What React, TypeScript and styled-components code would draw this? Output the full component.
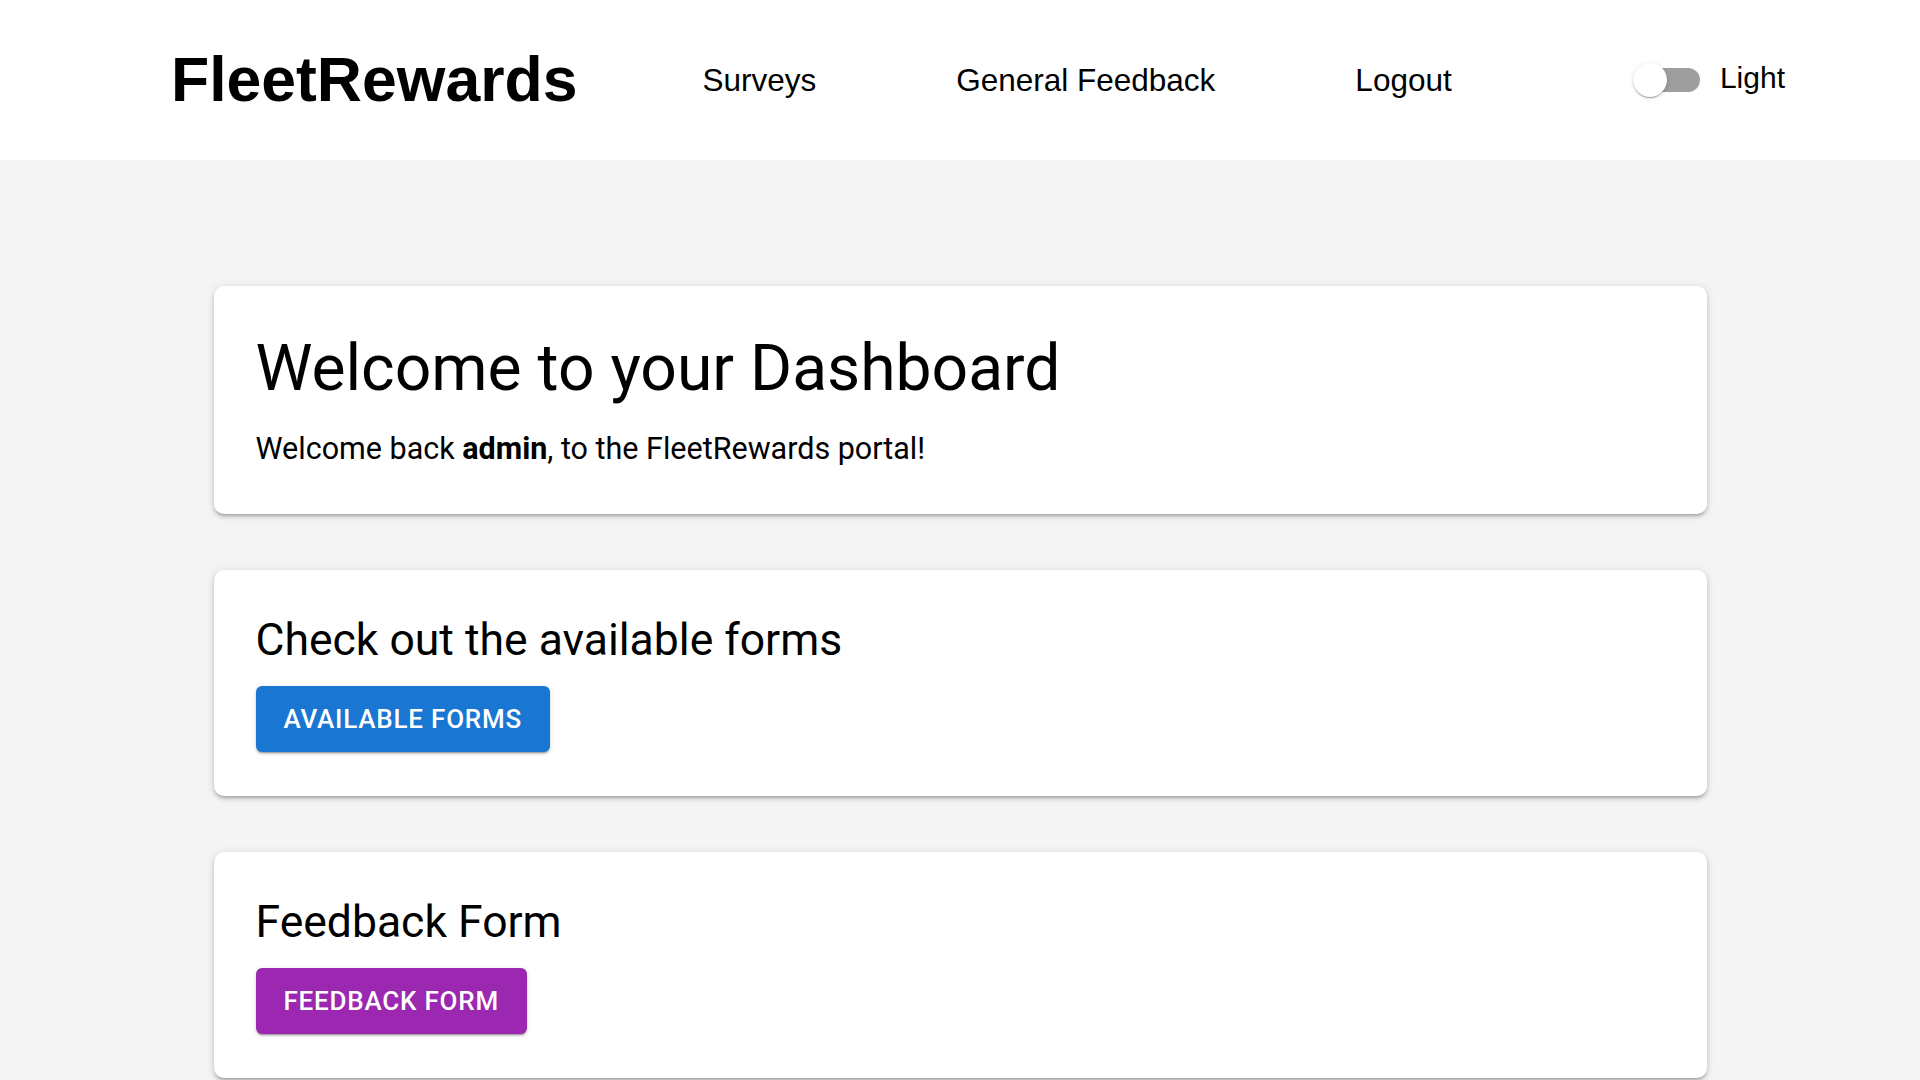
import React from "react";
import styled, { createGlobalStyle } from "styled-components";

const GlobalStyle = createGlobalStyle`
  * {
    box-sizing: border-box;
  }
  body {
    margin: 0;
    background: #f4f4f4;
    font-family: Roboto, "Liberation Sans", Arial, sans-serif;
    color: #000;
  }
`;

/* -------------------- HEADER -------------------- */
const Header = styled.header`
  height: 160px;
  background: #fff;
  display: flex;
  align-items: center;
  padding: 0 135px 0 171px;
  font-family: "Liberation Sans", Arial, sans-serif;
`;

const Logo = styled.div`
  font-size: 62.5px;
  font-weight: 700;
  color: #000;
  margin-top: -3px;
`;

const Nav = styled.nav`
  display: flex;
  align-items: center;
  gap: 140px;
  margin-left: 125px;
  margin-top: 1px;
`;

const NavLink = styled.a`
  font-size: 31.5px;
  color: #000;
  text-decoration: none;
  cursor: pointer;
`;

const ToggleGroup = styled.label`
  margin-left: auto;
  display: flex;
  align-items: center;
  gap: 20px;
  cursor: pointer;
`;

const Switch = styled.span`
  position: relative;
  width: 67px;
  height: 34px;
  display: inline-block;
`;

const Track = styled.span`
  position: absolute;
  left: 9px;
  right: 0;
  top: 5px;
  height: 24px;
  border-radius: 12px;
  background: #9e9e9e;
`;

const Thumb = styled.span<{ $on: boolean }>`
  position: absolute;
  top: 0;
  left: ${(p) => (p.$on ? "33px" : "0")};
  width: 34px;
  height: 34px;
  border-radius: 50%;
  background: #fff;
  box-shadow: 0px 2px 1px -1px rgba(0, 0, 0, 0.2),
    0px 1px 1px 0px rgba(0, 0, 0, 0.14), 0px 1px 4px 0px rgba(0, 0, 0, 0.16);
  transition: left 0.2s;
`;

const ToggleText = styled.span`
  font-size: 30px;
  color: #000;
  margin-top: -5px;
`;

/* -------------------- DASHBOARD -------------------- */
const Main = styled.main`
  display: flex;
  flex-direction: column;
  gap: 56px;
  padding: 126px 0 60px;
  max-width: 1493px;
  margin: 0 auto;
`;

const Card = styled.section`
  background: #fff;
  border-radius: 10px;
  padding: 42px 42px 44px;
  box-shadow: 0px 3px 3px -2px rgba(0, 0, 0, 0.2),
    0px 3px 4px 0px rgba(0, 0, 0, 0.14), 0px 1px 8px 0px rgba(0, 0, 0, 0.12);
  display: flex;
  flex-direction: column;
  align-items: flex-start;
`;

const Title = styled.h1`
  margin: 0;
  font-size: 64.2px;
  font-weight: 400;
  line-height: 1.25;
`;

const Subtitle = styled.h2`
  margin: 0;
  font-size: 44.5px;
  font-weight: 400;
  line-height: 1.28;
`;

const Lead = styled.p`
  margin: 18px 0 -2px;
  font-size: 30.5px;
  line-height: 1.5;
  b {
    font-weight: 700;
  }
`;

const ActionButton = styled.button<{ $color: string }>`
  margin-top: 17px;
  border: none;
  border-radius: 6px;
  background: ${(p) => p.$color};
  color: #fff;
  font-family: Roboto, sans-serif;
  font-weight: 500;
  font-size: 26px;
  line-height: 42px;
  letter-spacing: 0.03em;
  text-transform: uppercase;
  padding: 12px 28px;
  cursor: pointer;
  box-shadow: 0px 3px 1px -2px rgba(0, 0, 0, 0.2),
    0px 2px 2px 0px rgba(0, 0, 0, 0.14), 0px 1px 5px 0px rgba(0, 0, 0, 0.12);
`;

const App = () => {
  const [light, setLight] = React.useState(false);

  return (
    <>
      <GlobalStyle />
      <Header>
        <Logo>FleetRewards</Logo>
        <Nav>
          <NavLink>Surveys</NavLink>
          <NavLink>General Feedback</NavLink>
          <NavLink>Logout</NavLink>
        </Nav>
        <ToggleGroup onClick={() => setLight(!light)}>
          <Switch>
            <Track />
            <Thumb $on={light} />
          </Switch>
          <ToggleText>Light</ToggleText>
        </ToggleGroup>
      </Header>

      <Main>
        <Card>
          <Title>Welcome to your Dashboard</Title>
          <Lead>
            Welcome back <b>admin</b>, to the FleetRewards portal!
          </Lead>
        </Card>

        <Card>
          <Subtitle>Check out the available forms</Subtitle>
          <ActionButton $color="#1976d2">Available Forms</ActionButton>
        </Card>

        <Card>
          <Subtitle>Feedback Form</Subtitle>
          <ActionButton $color="#9c27b0">Feedback Form</ActionButton>
        </Card>
      </Main>
    </>
  );
};

export default App;
